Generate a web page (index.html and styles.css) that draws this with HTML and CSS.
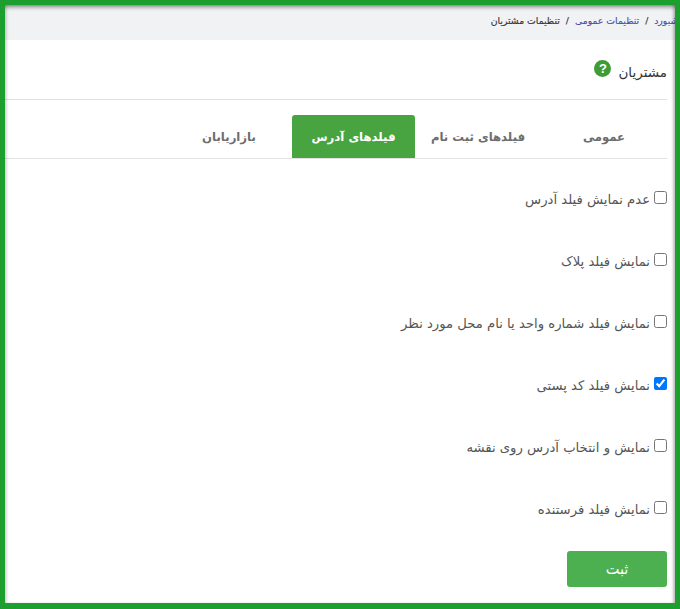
FILE: index.html
```html
<!DOCTYPE html>
<html lang="fa" dir="rtl">
<head>
    <meta charset="UTF-8">
    <meta name="viewport" content="width=device-width, initial-scale=1.0">
    <title>تنظیمات مشتریان</title>
    <link rel="stylesheet" href="styles.css">
</head>
<body>
    <div class="frame">
        <div class="breadcrumb">
            <a href="#">داشبورد</a> <span class="sep">/</span>
            <a href="#">تنظیمات عمومی</a> <span class="sep">/</span>
            <span>تنظیمات مشتریان</span>
        </div>

        <div class="title-row">
            <h1>مشتریان</h1>
            <span class="help">?</span>
        </div>

        <div class="tabs">
            <a class="tab" href="#">عمومی</a>
            <a class="tab" href="#">فیلدهای ثبت نام</a>
            <a class="tab active" href="#">فیلدهای آدرس</a>
            <a class="tab" href="#">بازاریابان</a>
        </div>

        <form class="options">
            <label class="option"><input type="checkbox"> عدم نمایش فیلد آدرس</label>
            <label class="option"><input type="checkbox"> نمایش فیلد پلاک</label>
            <label class="option"><input type="checkbox"> نمایش فیلد شماره واحد یا نام محل مورد نظر</label>
            <label class="option"><input type="checkbox" checked> نمایش فیلد کد پستی</label>
            <label class="option"><input type="checkbox"> نمایش و انتخاب آدرس روی نقشه</label>
            <label class="option"><input type="checkbox"> نمایش فیلد فرستنده</label>
            <button type="button" class="submit">ثبت</button>
        </form>
    </div>
</body>
</html>
```

FILE: styles.css
```css
* { box-sizing: border-box; }
html, body { margin: 0; padding: 0; }
body { font-family: "DejaVu Sans", sans-serif; color: #444; background: #fff; }
a { text-decoration: none; }

.frame { position: relative; width: 680px; height: 609px; border: solid #1c9f2e; border-width: 5px 5px 6px 5px; overflow: hidden; background: #fff; }
.frame::after { content: ""; position: absolute; inset: 0; pointer-events: none; box-shadow: inset 0 4px 4px -2px rgba(0,0,0,.45), inset 3px 0 3px -1px rgba(0,0,0,.12), inset -3px 0 3px -1px rgba(0,0,0,.22); }

.breadcrumb { height: 35px; line-height: 32px; background: #f1f2f4; font-size: 9.3px; color: #333; white-space: nowrap; overflow: hidden; text-indent: -10px; -webkit-text-stroke: 0.15px; }
.breadcrumb a { color: #4a4fa5; }
.breadcrumb .sep { margin: 0 3px; }

.title-row { display: flex; align-items: center; gap: 7px; height: 59px; margin-right: 8px; padding-top: 4px; }
.title-row h1 { margin: 0; font-size: 13.5px; font-weight: normal; color: #333; }
.help { width: 17px; height: 17px; border-radius: 50%; background: #3f9c35; color: #fff; font: bold 13px/17px "Liberation Sans", sans-serif; text-align: center; margin-top: -7px; }

.tabs { display: flex; margin-right: 8px; height: 60px; padding-top: 15px; border-top: 1px solid #e2e2e2; border-bottom: 1px solid #e2e2e2; }
.tab { width: 126px; height: 43px; line-height: 44px; text-align: center; font-size: 11.7px; font-weight: bold; color: #6d6d6d; }
.tab.active { width: 123px; background: #47a441; color: #fff; border-radius: 3px 3px 0 0; }

.options { display: flex; flex-direction: column; align-items: flex-start; padding: 32px 8px 0 0; }
.option { display: flex; align-items: flex-start; gap: 4px; height: 62px; font-size: 13.2px; line-height: 17px; color: #555; }
.option input { width: 13px; height: 13px; margin: 0; accent-color: #0075ff; }
.submit { width: 100px; height: 36px; margin-top: -12px; border: 0; border-radius: 3px; background: #4caf50; color: #fff; font: 14.5px "DejaVu Sans", sans-serif; }
```
